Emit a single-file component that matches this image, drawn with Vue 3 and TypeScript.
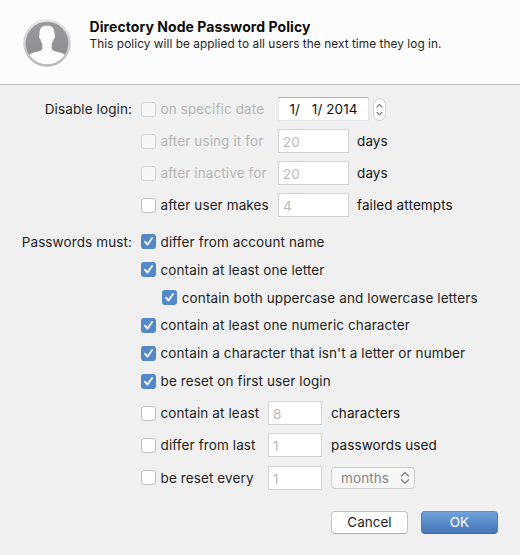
<script setup lang="ts">
import { ref } from 'vue'

interface LimitRow {
  text: string
  value: string
  unit: string
  disabled?: boolean
  kind?: 'date' | 'menu'
}
interface Rule {
  text: string
  nested?: boolean
}

const loginRows = ref<LimitRow[]>([
  { text: 'on specific date', value: '1/   1/ 2014', unit: '', disabled: true, kind: 'date' },
  { text: 'after using it for', value: '20', unit: 'days', disabled: true },
  { text: 'after inactive for', value: '20', unit: 'days', disabled: true },
  { text: 'after user makes', value: '4', unit: 'failed attempts' },
])
const rules = ref<Rule[]>([
  { text: 'differ from account name' },
  { text: 'contain at least one letter' },
  { text: 'contain both uppercase and lowercase letters', nested: true },
  { text: 'contain at least one numeric character' },
  { text: "contain a character that isn't a letter or number" },
  { text: 'be reset on first user login' },
])
const limits = ref<LimitRow[]>([
  { text: 'contain at least', value: '8', unit: 'characters' },
  { text: 'differ from last', value: '1', unit: 'passwords used' },
  { text: 'be reset every', value: '1', unit: 'months', kind: 'menu' },
])
</script>

<template>
  <main class="dialog">
    <header class="header">
      <svg class="avatar" viewBox="0 0 50 50">
        <defs>
          <linearGradient id="back" x1="0" y1="0" x2="0" y2="1">
            <stop offset="0" stop-color="#9a9a9e" />
            <stop offset="1" stop-color="#8b8b90" />
          </linearGradient>
          <linearGradient id="rim" x1="0" y1="0" x2="0" y2="1">
            <stop offset="0" stop-color="#e6e6e6" />
            <stop offset="1" stop-color="#b8b8ba" />
          </linearGradient>
          <clipPath id="disc"><circle cx="25" cy="25" r="21.3" /></clipPath>
        </defs>
        <circle cx="25" cy="25" r="23.8" fill="url(#rim)" />
        <circle cx="25" cy="25" r="21.3" fill="url(#back)" />
        <path
          clip-path="url(#disc)"
          fill="#fdfdfd"
          d="M25 7.500c-5.200 0-7.700 3.200-7.500 8.500 0 1-.6 1.200-.4 2.700.2 1.600.8 2.300 1.400 2.500.3 2 .9 3.300 1.800 4.400v5.200c-.5 2.200-4.400 2.700-8.400 3.700C8.500 35.500 6 37 4 40v9h42v-9c-2-3-4.500-4.500-7.900-5.500-4-1-7.900-1.500-8.400-3.700v-5.200c.9-1.100 1.500-2.400 1.800-4.400.6-.2 1.200-.9 1.400-2.500.2-1.500-.4-1.700-.4-2.700.2-5.300-2.300-8.500-7.500-8.500z"
        />
      </svg>
      <div class="heading">
        <h1>Directory Node Password Policy</h1>
        <p>This policy will be applied to all users the next time they log in.</p>
      </div>
    </header>

    <section class="group login">
      <h2>Disable login:</h2>
      <div class="rows">
        <div v-for="row in loginRows" :key="row.text" class="row">
          <span class="box" :class="{ dim: row.disabled }"></span>
          <span class="caption" :class="{ dim: row.disabled }">{{ row.text }}</span>
          <template v-if="row.kind === 'date'">
            <span class="field date">{{ row.value }}</span>
            <span class="stepper">
              <svg viewBox="0 0 12 22"><path d="M3.300 8.200 6 5.600l2.700 2.600M3.300 14.200 6 16.800l2.700-2.600" /></svg>
            </span>
          </template>
          <template v-else>
            <span class="field">{{ row.value }}</span>
            <span class="unit">{{ row.unit }}</span>
          </template>
        </div>
      </div>
    </section>

    <section class="group rules">
      <h2>Passwords must:</h2>
      <div class="rows">
        <div v-for="rule in rules" :key="rule.text" class="row" :class="{ nested: rule.nested }">
          <span class="box on">
            <svg viewBox="0 0 15 15"><path d="M4 7.700 6.500 10.600 11.100 4" /></svg>
          </span>
          <span>{{ rule.text }}</span>
        </div>
      </div>
    </section>

    <section class="group limits">
      <h2></h2>
      <div class="rows">
        <div v-for="row in limits" :key="row.text" class="row">
          <span class="box"></span>
          <span class="caption">{{ row.text }}</span>
          <span class="field">{{ row.value }}</span>
          <span v-if="row.kind === 'menu'" class="menu">
            {{ row.unit }}
            <svg viewBox="0 0 10 16"><path d="M1.500 6 5 2.600 8.500 6M1.500 9.800 5 13.200l3.500-3.400" /></svg>
          </span>
          <span v-else class="unit">{{ row.unit }}</span>
        </div>
      </div>
    </section>

    <footer class="actions">
      <button class="cancel" type="button">Cancel</button>
      <button class="ok" type="button">OK</button>
    </footer>
  </main>
</template>

<style>
body {
  background: #f0f0f0;
}
</style>

<style scoped>
.dialog {
  box-sizing: border-box;
  width: 520px;
  height: 555px;
  overflow: hidden;
  background: #f0f0f0;
  color: #1e1e1e;
  font: 13.5px/20px Inter, "Liberation Sans", sans-serif;
  letter-spacing: 0.11px;
}
.header {
  box-sizing: border-box;
  display: flex;
  gap: 17.5px;
  height: 85px;
  padding: 18px 0 0 22px;
  background: #fcfcfc;
  border-bottom: 1px solid #c1c1c1;
}
.avatar {
  width: 50px;
  height: 50px;
}
h1,
h2,
p {
  margin: 0;
}
h1 {
  font-size: 14px;
  line-height: 18px;
  font-weight: 700;
  letter-spacing: 0.07px;
  color: #0c0c0c;
}
p {
  font-size: 11.8px;
  line-height: 17px;
  letter-spacing: 0.07px;
}
.group {
  display: flex;
  gap: 9px;
}
.login {
  padding-top: 8px;
}
.rules {
  padding-top: 7px;
}
.limits {
  padding-top: 2px;
}
h2 {
  width: 132px;
  font-size: inherit;
  font-weight: 400;
  text-align: right;
  line-height: 32px;
}
.rules h2 {
  line-height: 28px;
}
.row {
  display: flex;
  align-items: center;
  height: 32px;
  white-space: pre;
}
.rules .row {
  height: 27.85px;
}
.limits .row {
  height: 32.2px;
}
.nested {
  padding-left: 21.3px;
}
.box {
  box-sizing: border-box;
  flex: none;
  width: 15px;
  height: 15px;
  margin-right: 4.5px;
  background: #fff;
  border: 1px solid #bdbdbd;
  border-radius: 3px;
}
.box.dim {
  background: #f7f7f7;
  border-color: #d3d3d3;
}
.box.on {
  background: #5389c8;
  border: 0;
}
.box svg {
  display: block;
  fill: none;
  stroke: #fff;
  stroke-width: 1.8;
  stroke-linecap: round;
  stroke-linejoin: round;
}
.caption {
  width: 117.500px;
}
.limits .caption {
  width: 107.500px;
}
.caption.dim {
  color: #b6b6b6;
}
.field {
  box-sizing: border-box;
  width: 71px;
  height: 24px;
  padding: 2px 0 0 4px;
  background: #fff;
  border: 1px solid #d4d4d4;
  color: #bababa;
}
.limits .field {
  width: 54px;
}
.field.date {
  width: 91px;
  padding: 1px 0 0 10.5px;
  border-color: #b0b0b0 #e2e2e2 #e8e8e8;
  color: #111;
}
.unit {
  margin-left: 8px;
  color: #161616;
}
.limits .unit {
  margin-left: 9px;
}
.stepper {
  box-sizing: border-box;
  width: 13px;
  height: 23px;
  margin-left: 4px;
  background: #fff;
  border: 1px solid #d0d0d0;
  border-radius: 6.5px;
}
.stepper svg {
  display: block;
  width: 11px;
  height: 21px;
}
.stepper path,
.menu path {
  fill: none;
  stroke: #858585;
  stroke-width: 1.4;
  stroke-linecap: round;
  stroke-linejoin: round;
}
.menu {
  box-sizing: border-box;
  display: flex;
  align-items: center;
  justify-content: space-between;
  width: 84px;
  height: 22px;
  margin-left: 9px;
  padding: 0 4px 0 9px;
  background: #f7f7f7;
  border: 1px solid #cfcfcf;
  border-radius: 4px;
  color: #868686;
}
.menu svg {
  width: 10px;
  height: 16px;
}
.actions {
  display: flex;
  justify-content: flex-end;
  gap: 13px;
  padding: 17px 22px 0 0;
}
button {
  box-sizing: border-box;
  width: 77px;
  height: 23px;
  padding: 0;
  border: 1px solid #c3c3c3;
  border-bottom-color: #adadad;
  border-radius: 4px;
  background: #fff;
  color: #1e1e1e;
  font: inherit;
}
.ok {
  border-color: #5c90cb #4a7dbd #3a68a9;
  background: linear-gradient(#70a3d9, #4374b8);
  color: #fff;
}
</style>
